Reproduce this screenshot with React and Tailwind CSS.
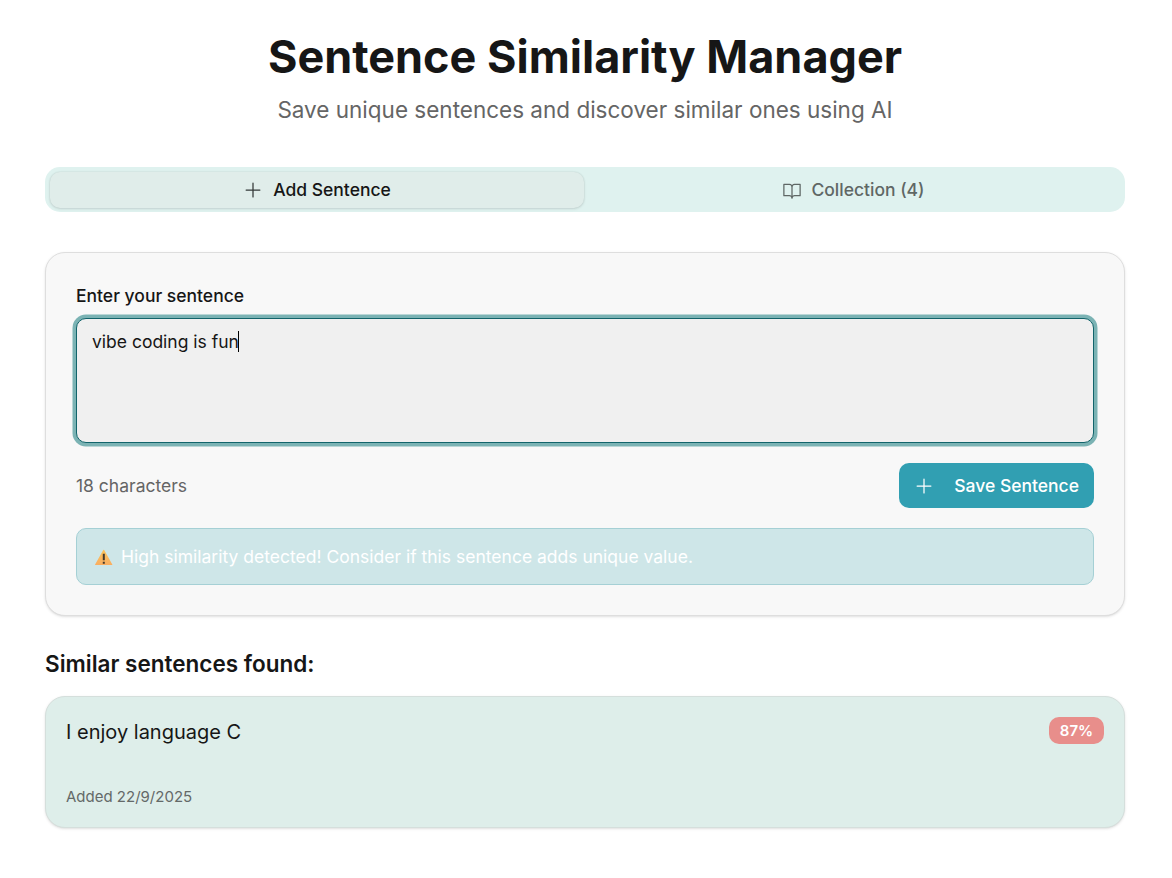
import { PiBookOpen, PiPlus } from "react-icons/pi";

function Header() {
  return (
    <header className="flex flex-col items-center text-center">
      <h1 className="text-[45px] leading-[50px] font-bold text-[#161616]">Sentence Similarity Manager</h1>
      <p className="mt-[10px] text-[22.5px] leading-[35px] text-[#656565]">
        Save unique sentences and discover similar ones using AI
      </p>
    </header>
  );
}

function Tabs() {
  return (
    <div className="mt-[40px] grid h-[45px] grid-cols-2 items-center rounded-[15px] bg-[#dff2ef] px-[5px] py-[4px] text-[17.5px] leading-[25px] font-medium">
      <button className="mt-px mr-px flex h-[36px] items-center justify-center gap-[10px] rounded-[10px] bg-[#e0edea] pb-px text-[#161616] shadow-[0_0_2px_rgba(0,0,0,0.12),0_1px_3px_rgba(0,0,0,0.1)]">
        <PiPlus size={20} className="text-[#333938]" />
        Add Sentence
      </button>
      <button className="flex h-[37px] items-center justify-center gap-[9px] pl-[2px] text-[#5f6765]">
        <PiBookOpen size={20} />
        Collection (4)
      </button>
    </div>
  );
}

function WarningIcon() {
  return (
    <svg width="19" height="17" viewBox="0 0 19 17" className="mt-[2px]" aria-hidden="true">
      <defs>
        <linearGradient id="warn" x1="0" y1="0" x2="0" y2="1">
          <stop offset="0" stopColor="#fcc45c" />
          <stop offset="1" stopColor="#f9ae61" />
        </linearGradient>
      </defs>
      <path d="M9.2 1.1Q9.7.2 10.2 1.1L18.3 15.4Q18.6 16 18 16H1.4Q.8 16 1.1 15.4Z" fill="url(#warn)" />
      <path d="M8.8 4.8h2v6.4h-2zM8.8 12.7h2v2h-2z" fill="#44392a" />
    </svg>
  );
}

function SentenceForm() {
  return (
    <section className="mt-[40px] rounded-[20px] border border-[#dedede] bg-[#f8f8f8] p-[30px] shadow-[0_1px_3px_rgba(0,0,0,0.1),0_1px_2px_-1px_rgba(0,0,0,0.1)]">
      <div className="text-[17.5px] leading-[25px] font-medium text-[#161616]">Enter your sentence</div>
      <div className="mt-[10px] flex h-[125px] items-start rounded-[10px] border border-[#12646b] bg-[#f0f0f0] px-[15px] py-[10px] shadow-[0_0_0_3.5px_#7bb3b4]">
        <span className="text-[17.5px] leading-[25px] text-[#161616]">vibe coding is fun</span>
        <span className="mt-[2px] -ml-px h-[21px] w-px bg-black" />
      </div>
      <div className="mt-[20px] flex items-center justify-between">
        <span className="text-[17.5px] leading-[25px] text-[#656565]">18 characters</span>
        <button className="flex h-[45px] w-[195px] items-center justify-between rounded-[10px] bg-[#319fb2] px-[15px] text-[17.5px] leading-[25px] font-medium text-white">
          <PiPlus size={20} />
          Save Sentence
        </button>
      </div>
      <div className="mt-[20px] flex h-[57px] items-center rounded-[10px] border border-[#a5d0d5] bg-[#cee6e8] px-[17px] text-[17.5px] leading-[25px] text-white">
        <WarningIcon />
        <span className="ml-[8px]">High similarity detected! Consider if this sentence adds unique value.</span>
      </div>
    </section>
  );
}

function SimilarSentence() {
  return (
    <article className="mt-[15px] flex h-[132px] flex-col justify-between rounded-[20px] border border-[#d5dfdc] bg-[#deeeea] p-[20px] pb-[18px] shadow-[0_1px_3px_rgba(0,0,0,0.1),0_1px_2px_-1px_rgba(0,0,0,0.1)]">
      <div className="flex items-start justify-between">
        <p className="text-[20px] leading-[30px] text-[#161616]">I enjoy language C</p>
        <span className="flex h-[27px] w-[55px] items-center justify-center rounded-[10px] bg-[#e88e8b] text-[15px] leading-[20px] font-semibold text-white">
          87%
        </span>
      </div>
      <p className="text-[15px] leading-[24px] text-[#646968]">Added 22/9/2025</p>
    </article>
  );
}

export default function App() {
  return (
    <main className="h-[878px] overflow-hidden bg-white pt-[32px] pr-[47px] pl-[45px] font-['Inter',sans-serif]">
      <Header />
      <Tabs />
      <SentenceForm />
      <h2 className="mt-[30px] text-[22.5px] leading-[35px] font-semibold text-[#161616]">Similar sentences found:</h2>
      <SimilarSentence />
    </main>
  );
}
